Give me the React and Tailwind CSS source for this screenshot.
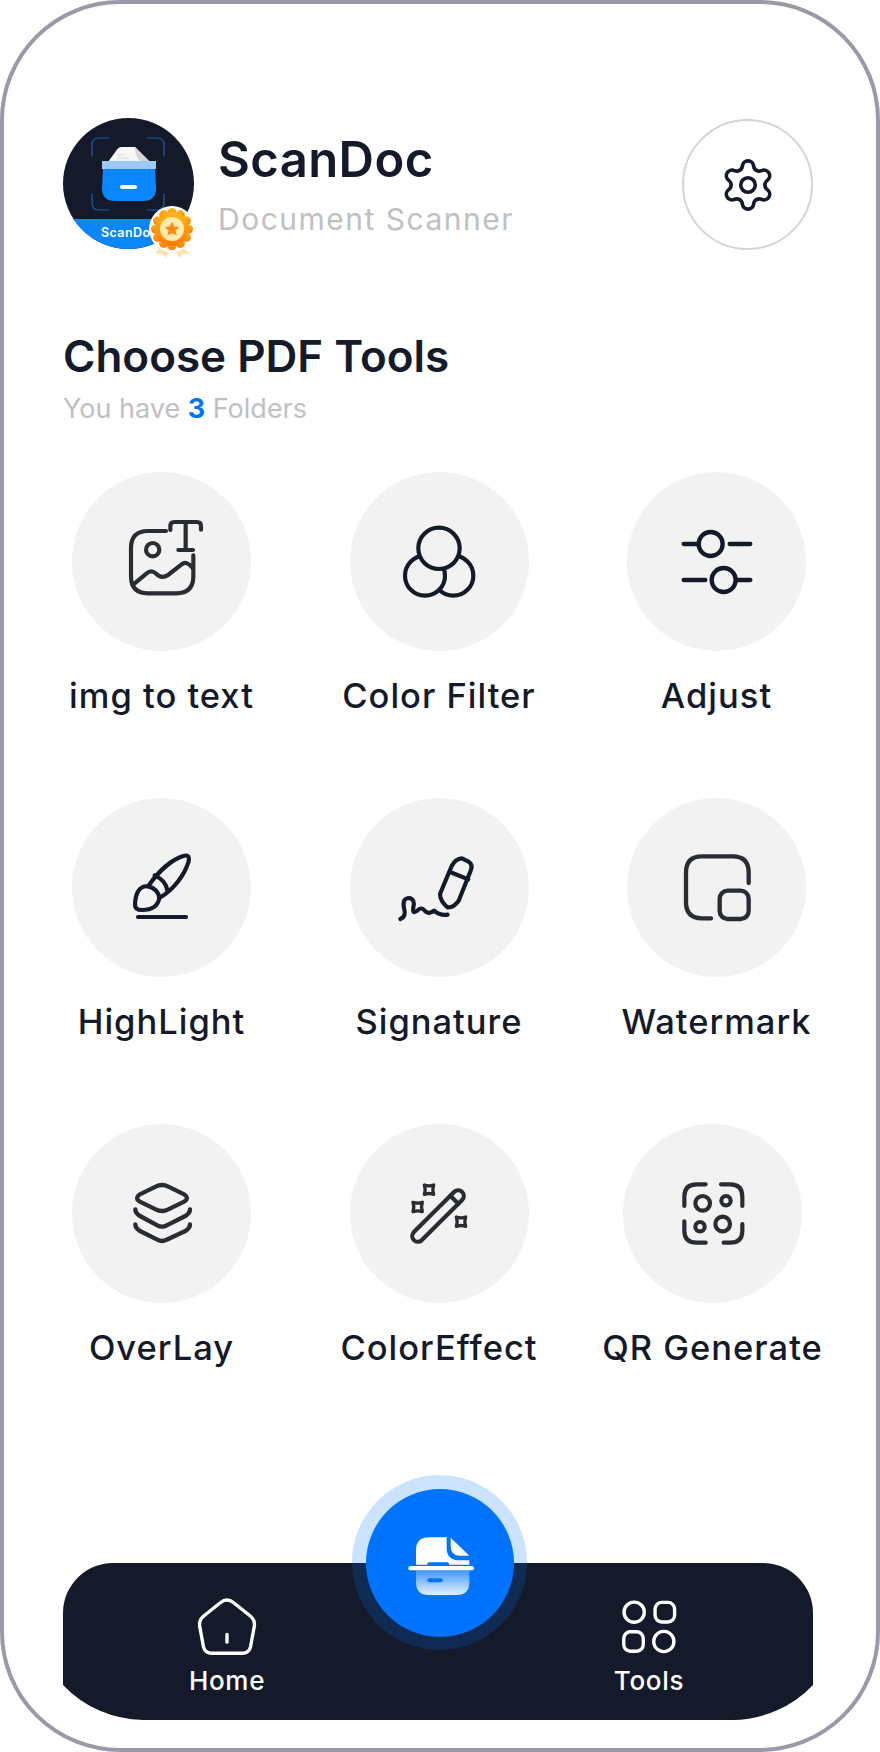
import { Settings } from 'lucide-react';

const DARK = '#141a29';
const SOFT = '#292d32';

function IconBox({ cx, cy, color = DARK, sw = 12.5, children }) {
  return (
    <svg
      width="100"
      height="100"
      viewBox={`${cx - 150} ${cy - 150} 300 300`}
      fill="none"
      stroke={color}
      strokeWidth={sw}
      strokeLinecap="round"
      strokeLinejoin="round"
    >
      {children}
    </svg>
  );
}

const ImgToText = () => (
  <IconBox cx={304} cy={304} color={SOFT}>
    <path d="M329 208V196Q329 184 341 184H409Q421 184 421 196V207" />
    <path d="M375 184V268M353 268H397" />
    <path d="M316 211H262Q211 211 211 262V347Q211 398 262 398H347Q398 398 398 347V284" />
    <circle cx="276" cy="267" r="20" />
    <path d="M222 368L258 338Q272 326 285 338Q302 356 322 343L362 312Q378 298 396 322" />
  </IconBox>
);

const ColorFilter = () => (
  <IconBox cx={1137} cy={304}>
    <circle cx="1180" cy="345" r="60" fill="#f2f2f3" />
    <circle cx="1095" cy="345" r="60" fill="#f2f2f3" />
    <circle cx="1137" cy="263" r="62" fill="#f2f2f3" />
  </IconBox>
);

const Adjust = () => (
  <IconBox cx={770} cy={304} sw={13}>
    <path d="M670 250H712M808 250H870M670 358H735M832 358H870" />
    <circle cx="751" cy="250" r="36" />
    <circle cx="790" cy="358" r="36" />
  </IconBox>
);

const Brush = () => (
  <IconBox cx={304} cy={292}>
    <path d="M262 287C296 238 336 206 368 196Q388 190 384 212C372 252 340 296 296 322" />
    <path d="M282 254Q314 268 320 298" />
    <path d="M262 287C236 284 224 308 223 342Q223 358 244 358C274 358 292 346 296 322C294 304 280 290 262 287Z" />
    <path d="M232 379H376" />
  </IconBox>
);

const Signature = () => (
  <IconBox cx={1137} cy={292}>
    <path d="M1021 385Q1040 378 1032 352Q1026 322 1048 322Q1066 326 1060 350Q1056 372 1072 360Q1084 346 1096 362Q1108 372 1122 360Q1140 376 1163 372" />
    <path d="M1175 226Q1186 204 1206 203L1224 212Q1240 222 1232 240L1196 330Q1180 352 1162 350Q1140 330 1140 310Z" />
    <path d="M1170 244L1225 266" />
  </IconBox>
);

const Watermark = () => (
  <IconBox cx={770} cy={292} color={SOFT} sw={13}>
    <path d="M752 383H725Q677 383 677 335V245Q677 197 725 197H817Q865 197 865 245V277" />
    <rect x="778" y="300" width="87" height="85" rx="24" />
  </IconBox>
);

const Overlay = () => (
  <IconBox cx={304} cy={280} color={SOFT} sw={13}>
    <path d="M285 198Q304 188 323 198L372 222Q386 232 372 242L323 266Q304 276 285 266L236 242Q222 232 236 222Z" />
    <path d="M224 266Q224 278 238 286L290 314Q304 322 318 314L374 286Q388 278 388 266" />
    <path d="M224 311Q224 323 238 331L290 357Q304 365 318 357L374 331Q388 323 388 311" />
  </IconBox>
);

const sparkle = (x, y) =>
  `M${x - 14} ${y - 14}Q${x} ${y - 9} ${x + 14} ${y - 14}Q${x + 9} ${y} ${x + 14} ${y + 14}Q${x} ${y + 9} ${x - 14} ${y + 14}Q${x - 9} ${y} ${x - 14} ${y - 14}Z`;

const ColorEffect = () => (
  <IconBox cx={1137} cy={280} color={SOFT}>
    <path d="M1061 335L1183 213A17 17 0 0 1 1207 237L1085 359A17 17 0 0 1 1061 335Z" />
    <path d="M1171 225L1195 249" />
    <g strokeWidth="10">
      <path d={sparkle(1107, 207)} />
      <path d={sparkle(1073, 259)} />
      <path d={sparkle(1203, 303)} />
    </g>
  </IconBox>
);

const QrGenerate = () => (
  <IconBox cx={757} cy={280} color={SOFT}>
    <path d="M735 191H708Q671 191 671 228V256" />
    <path d="M781 191H809Q845 191 845 228V256" />
    <path d="M671 302V330Q671 366 708 366H735" />
    <path d="M789 366H809Q845 366 845 330V310" />
    <circle cx="726" cy="248" r="22" />
    <circle cx="796" cy="240" r="14" />
    <circle cx="718" cy="318" r="14" />
    <circle cx="786" cy="310" r="22" />
  </IconBox>
);

const tools = [
  { label: 'img to text', Icon: ImgToText },
  { label: 'Color Filter', Icon: ColorFilter },
  { label: 'Adjust', Icon: Adjust },
  { label: 'HighLight', Icon: Brush },
  { label: 'Signature', Icon: Signature },
  { label: 'Watermark', Icon: Watermark },
  { label: 'OverLay', Icon: Overlay },
  { label: 'ColorEffect', Icon: ColorEffect },
  { label: 'QR Generate', Icon: QrGenerate, shift: true },
];

function Avatar() {
  const scallops = Array.from({ length: 12 }, (_, i) => {
    const a = (i * Math.PI) / 6;
    return { x: 109 + Math.cos(a) * 16.5, y: 111 + Math.sin(a) * 16.5 };
  });
  return (
    <svg width="131" height="131" viewBox="0 0 131 131" className="shrink-0 overflow-visible">
      <defs>
        <clipPath id="avatarClip">
          <circle cx="65.5" cy="65.5" r="65.5" />
        </clipPath>
        <linearGradient id="medal" x1="0" y1="0" x2="0" y2="1">
          <stop offset="0" stopColor="#ffb81f" />
          <stop offset="1" stopColor="#ff7a00" />
        </linearGradient>
      </defs>
      <g clipPath="url(#avatarClip)">
        <rect width="131" height="131" fill={DARK} />
        <rect y="101" width="131" height="30" fill="#0a87ff" />
        <text x="38" y="119" fill="#fff" fontSize="12.5" fontWeight="600" letterSpacing="0.4" fontFamily="Inter, sans-serif">ScanDoc</text>
      </g>
      <g fill="none" stroke="#1b5fa6" strokeWidth="1.2" strokeLinecap="round">
        <path d="M46 20H36Q29 20 29 27V38" />
        <path d="M84 20H94Q101 20 101 27V38" />
        <path d="M29 76V85Q29 92 36 92H46" />
        <path d="M101 76V85Q101 92 94 92H84" />
      </g>
      <path d="M45 44L53 33Q55 29 59 29H72L87 44Z" fill="#f7f7f7" />
      <path d="M72 29L87 44H78Q72 40 72 29Z" fill="#d6d6d6" />
      <path d="M54 37H62M54 40H66" stroke="#d9d9d9" strokeWidth="1" />
      <rect x="39" y="43" width="54" height="8" fill="#9cc9f7" />
      <path d="M40 51H92L93 70Q93 83 80 83H52Q39 83 39 70Z" fill="#0a87ff" />
      <rect x="57" y="67" width="17" height="4" rx="2" fill="#fff" />
      <path d="M98.7 126L92 136L99.7 136L103 140L107.7 130Z" fill="#ffe7ab" />
      <path d="M117 126L127 136L119.7 136L116 140L111 130Z" fill="#ffe7ab" />
      <circle cx="109" cy="111" r="23" fill="#fff" />
      {scallops.map((s, i) => (
        <circle key={i} cx={s.x} cy={s.y} r="4.6" fill="url(#medal)" />
      ))}
      <circle cx="109" cy="111" r="17" fill="url(#medal)" />
      <circle cx="109" cy="111" r="12" fill="#ffeab0" />
      <path d="M109 103.5L111.2 108.4L116.4 109L112.5 112.5L113.6 117.6L109 115L104.4 117.6L105.5 112.5L101.6 109L106.8 108.4Z" fill="#ff8a0c" />
    </svg>
  );
}

function ToolTile({ label, Icon, shift }) {
  return (
    <div className={`flex flex-col items-center ${shift ? 'mr-[8px]' : ''}`}>
      <div className="w-[179px] h-[179px] rounded-full bg-[#f2f2f3] flex items-center justify-center">
        <Icon />
      </div>
      <p className="mt-[23px] text-[34.5px] leading-[44px] tracking-[1px] font-medium text-[#141a29] whitespace-nowrap">{label}</p>
    </div>
  );
}

function HomeIcon() {
  return (
    <svg width="64" height="64" viewBox="435 165 190 190" fill="none" stroke="#fff" strokeWidth="10" strokeLinecap="round" strokeLinejoin="round">
      <path d="M510 188Q530 172 550 188L600 228Q614 240 611 258L600 318Q595 338 575 338H485Q465 338 460 318L449 258Q446 240 460 228Z" />
      <path d="M530 282V305" />
    </svg>
  );
}

function ToolsIcon() {
  return (
    <svg width="64" height="64" viewBox="112 165 190 190" fill="none" stroke="#fff" strokeWidth="10">
      <circle cx="163" cy="216" r="30" />
      <rect x="225" y="187" width="58" height="58" rx="20" />
      <rect x="132" y="274" width="58" height="58" rx="20" />
      <circle cx="251" cy="303" r="30" />
    </svg>
  );
}

function ScanButton() {
  return (
    <svg width="100" height="100" viewBox="150 150 300 300" fill="none">
      <defs>
        <linearGradient id="tray" x1="0" y1="0" x2="0" y2="1">
          <stop offset="0" stopColor="#fff" stopOpacity="0.25" />
          <stop offset="1" stopColor="#fff" stopOpacity="0.9" />
        </linearGradient>
      </defs>
      <path d="M228 305V262Q228 223 268 223H320V255Q320 292 358 292H388V305Z" fill="#fff" />
      <path d="M332 224L388 278H358Q332 278 332 250Z" fill="#fff" />
      <rect x="205" y="309" width="197" height="13" rx="6.5" fill="#fff" />
      <rect x="262" y="298" width="65" height="11" rx="5.5" fill="#0073ff" />
      <path d="M228 322H388V358Q388 396 350 396H266Q228 396 228 358Z" fill="url(#tray)" />
      <rect x="262" y="346" width="46" height="12" rx="6" fill="#0073ff" />
    </svg>
  );
}

export default function App() {
  return (
    <div className="relative w-[880px] h-[1752px] bg-white border-4 border-[#9a99a8] rounded-[120px] flex flex-col px-[59px] pt-[113px] pb-[28px] overflow-hidden [font-family:Inter,sans-serif]">
      {/* Header */}
      <header className="flex items-center justify-between pr-[4px]">
        <div className="flex items-center gap-[24px]">
          <Avatar />
          <div className="mt-[3px]">
            <h1 className="text-[49px] leading-[56px] tracking-[0.4px] font-semibold text-[#141a29]">ScanDoc</h1>
            <p className="mt-[11px] text-[30px] leading-[40px] tracking-[1.5px] text-[#bfbfc4]">Document Scanner</p>
          </div>
        </div>
        <button className="mt-[2px] w-[131px] h-[131px] rounded-full border-2 border-[#d4d4d4] flex items-center justify-center">
          <Settings size={58} strokeWidth={1.5} color="#141a29" />
        </button>
      </header>

      <h2 className="mt-[78px] text-[44px] leading-[56px] font-semibold text-[#141a29]">Choose PDF Tools</h2>
      <p className="mt-[9px] text-[27px] leading-[32px] text-[#bfbfc4]">
        You have <span className="font-bold text-[#0073ff]">3</span> Folders
      </p>

      {/* Tools grid */}
      <div className="mt-[47px] grid grid-cols-[197px_197px_197px] gap-x-[80.5px] gap-y-[80px]">
        {tools.map((t) => (
          <ToolTile key={t.label} {...t} />
        ))}
      </div>

      {/* Bottom nav */}
      <div className="relative mt-auto w-[750px] h-[157px]">
        <nav className="w-full h-full bg-[#141a29] flex items-start justify-between px-[114px] pt-[32px] [clip-path:path('M50,0H700A50,50,0,0,1,750,50V122A112,112,0,0,1,670,157H80A112,112,0,0,1,0,122V50A50,50,0,0,1,50,0Z')]">
          <div className="w-[100px] flex flex-col items-center">
            <HomeIcon />
            <span className="mt-[5px] text-[26px] leading-[34px] tracking-[0.7px] font-medium text-white">Home</span>
          </div>
          <div className="w-[100px] flex flex-col items-center">
            <ToolsIcon />
            <span className="mt-[5px] text-[26px] leading-[34px] tracking-[0.7px] font-medium text-white">Tools</span>
          </div>
        </nav>
        <div className="absolute left-[289px] top-[-88px] w-[175px] h-[175px] rounded-full bg-[#0073ff]/20 flex items-center justify-center">
          <div className="w-[148px] h-[148px] rounded-full bg-[#0073ff] flex items-center justify-center">
            <ScanButton />
          </div>
        </div>
      </div>
    </div>
  );
}
